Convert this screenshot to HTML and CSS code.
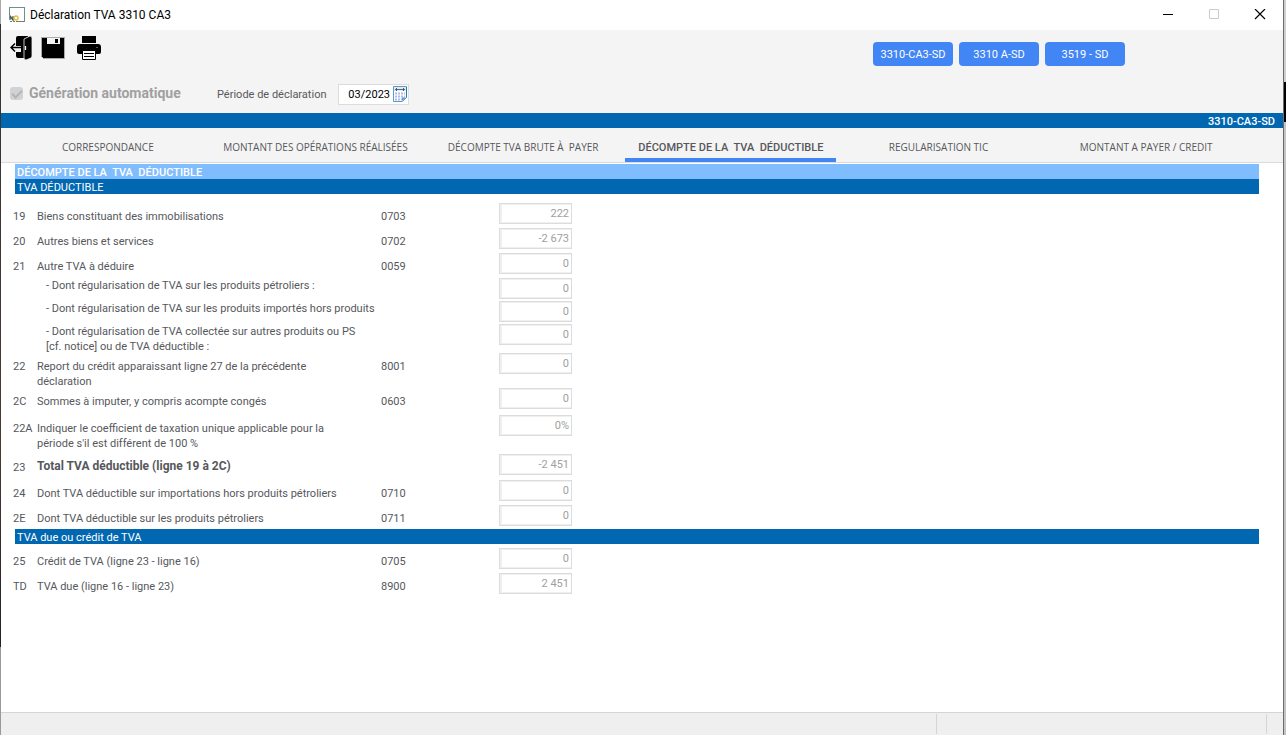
FILE: index.html
```html
<!DOCTYPE html>
<html lang="fr">
<head>
<meta charset="utf-8">
<title>Déclaration TVA 3310 CA3</title>
<link rel="stylesheet" href="styles.css">
</head>
<body>
<div class="desktop">
<div class="edge-left"></div>
<div class="window">
  <header class="titlebar">
    <svg class="app-icon" width="16" height="16" viewBox="0 0 16 16" aria-hidden="true">
      <rect x=".5" y=".5" width="15" height="14" fill="#fff" stroke="#6f9087"/>
      <path d="M0 8h9v7H0z" fill="#fff"/>
      <path d="M1 13V9l3 4V9" fill="none" stroke="#3f5560" stroke-width="1.3"/>
      <circle cx="7" cy="11" r="2" fill="none" stroke="#e3bd3c" stroke-width="1.4"/>
      <path d="M1 14.500h14" stroke="#6f7a60" stroke-dasharray="2 1"/>
    </svg>
    <h1 class="title">Déclaration TVA 3310 CA3</h1>
    <div class="controls">
      <button class="control" aria-label="Réduire"><svg width="12" height="12" viewBox="0 0 12 12"><path d="M1 5.500h10" stroke="#000"/></svg></button>
      <button class="control" aria-label="Agrandir" disabled><svg width="12" height="12" viewBox="0 0 12 12"><path d="M1.500.5h9v9h-9z" fill="none" stroke="#ccc"/></svg></button>
      <button class="control" aria-label="Fermer"><svg width="12" height="12" viewBox="0 0 12 12"><path d="M1 0l10 10M11 0L1 10" stroke="#000" stroke-width="1.200"/></svg></button>
    </div>
  </header>

  <div class="toolbar">
    <div class="tools">
      <button class="tool" aria-label="Quitter">
        <svg width="24" height="26" viewBox="0 0 24 26"><path d="M8 1h10v22H8q-2 0-2-2v-4h5v-6H6V3q0-2 2-2z"/><path d="M14 4l6-3q2 0 2 2v18q0 1-1 2l-5 2q-2 0-2-2z" stroke="#f4f4f4" stroke-width=".8"/><path d="M1 12.500h10M5 8.500l-4 4 4 4" fill="none" stroke="#000" stroke-width="1.500"/><path d="M15.500 11v4" stroke="#f4f4f4" stroke-width="1.300"/></svg>
      </button>
      <button class="tool" aria-label="Enregistrer">
        <svg width="24" height="24" viewBox="0 0 24 24"><path d="M.5 1.500h23v21H2.500l-2-2z" stroke="#aaa"/><path d="M6 2h13v6H6z" fill="#f4f4f4"/><path d="M14 3h3v4h-3z"/></svg>
      </button>
      <button class="tool" aria-label="Imprimer">
        <svg width="24" height="24" viewBox="0 0 24 24"><path d="M5 0h14v7H5z"/><path d="M3 8h18q3 0 3 3v5q0 2-2 2H2q-2 0-2-2v-5q0-3 3-3z"/><path d="M5.500 14.500h13v9h-13z" fill="#fff" stroke="#000"/><path d="M7 17.500h10M7 20.500h10" stroke="#000"/><path d="M19 11.500h2" stroke="#555"/></svg>
      </button>
    </div>
    <nav class="forms">
      <button class="form-button">3310-CA3-SD</button>
      <button class="form-button">3310 A-SD</button>
      <button class="form-button">3519 - SD</button>
    </nav>
  </div>

  <div class="options">
    <label class="auto"><input type="checkbox" class="check" checked disabled>Génération automatique</label>
    <label class="period-label" for="period">Période de déclaration</label>
    <div class="period">
      <input class="period-input" id="period" type="text" value="03/2023">
      <button class="calendar" aria-label="Choisir une date">
        <svg width="14" height="16" viewBox="0 0 14 16"><path d="M.5.5h13v11l-4 4h-9z" fill="#fff" stroke="#5c9bc7"/><path d="M1 1h12v4H1z" fill="#d9ecf7"/><path d="M2 3.500h10" stroke="#666"/><path d="M3.500 2v3M10.500 2v3" stroke="#555"/><path d="M2 7.500h10M2 10.500h10M2 13.500h7" stroke="#a9bcea" stroke-width="2" stroke-dasharray="2 1"/><path d="M13 11.500l-4 3.500v-3.500z" fill="#5b97cd"/><path d="M13.500 1v10.500" stroke="#1e78b5"/></svg>
      </button>
    </div>
  </div>

  <div class="form-band">3310-CA3-SD</div>

  <div class="tabs" role="tablist">
    <button class="tab" role="tab">CORRESPONDANCE</button>
    <button class="tab" role="tab">MONTANT DES OPÉRATIONS RÉALISÉES</button>
    <button class="tab" role="tab">DÉCOMPTE TVA BRUTE À&nbsp; PAYER</button>
    <button class="tab active" role="tab" aria-selected="true">DÉCOMPTE DE LA&nbsp; TVA&nbsp; DÉDUCTIBLE</button>
    <button class="tab" role="tab">REGULARISATION TIC</button>
    <button class="tab" role="tab">MONTANT A PAYER / CREDIT</button>
  </div>

  <main class="content">
    <h2 class="band light">DÉCOMPTE DE LA&nbsp; TVA&nbsp; DÉDUCTIBLE</h2>
    <h3 class="band">TVA DÉDUCTIBLE</h3>
    <div class="lines first">
      <div class="line"><span>19</span><label for="l19">Biens constituant des immobilisations</label><span>0703</span><input id="l19" class="amount" value="222" disabled></div>
      <div class="line"><span>20</span><label for="l20">Autres biens et services</label><span>0702</span><input id="l20" class="amount" value="-2 673" disabled></div>
      <div class="line lead"><span>21</span><label for="l21">Autre TVA à déduire</label><span>0059</span><input id="l21" class="amount" value="0" disabled></div>
      <div class="line sub"><span></span><label for="l21a">- Dont régularisation de TVA sur les produits pétroliers :</label><span></span><input id="l21a" class="amount" value="0" disabled></div>
      <div class="line sub"><span></span><label for="l21b">- Dont régularisation de TVA sur les produits importés hors produits</label><span></span><input id="l21b" class="amount" value="0" disabled></div>
      <div class="line sub"><span></span><label for="l21c">- Dont régularisation de TVA collectée sur autres produits ou PS<br>[cf. notice] ou de TVA déductible :</label><span></span><input id="l21c" class="amount" value="0" disabled></div>
      <div class="line"><span>22</span><label for="l22">Report du crédit apparaissant ligne 27 de la précédente<br>déclaration</label><span>8001</span><input id="l22" class="amount" value="0" disabled></div>
      <div class="line spaced"><span>2C</span><label for="l2c">Sommes à imputer, y compris acompte congés</label><span>0603</span><input id="l2c" class="amount" value="0" disabled></div>
      <div class="line tall"><span>22A</span><label for="l22a">Indiquer le coefficient de taxation unique applicable pour la<br>période s'il est différent de 100 %</label><span></span><input id="l22a" class="amount" value="0%" disabled></div>
      <div class="line total"><span>23</span><label for="l23">Total TVA déductible (ligne 19 à 2C)</label><span></span><input id="l23" class="amount" value="-2 451" disabled></div>
      <div class="line"><span>24</span><label for="l24">Dont TVA déductible sur importations hors produits pétroliers</label><span>0710</span><input id="l24" class="amount" value="0" disabled></div>
      <div class="line lead"><span>2E</span><label for="l2e">Dont TVA déductible sur les produits pétroliers</label><span>0711</span><input id="l2e" class="amount" value="0" disabled></div>
    </div>
    <h3 class="band">TVA due ou crédit de TVA</h3>
    <div class="lines">
      <div class="line"><span>25</span><label for="l25">Crédit de TVA (ligne 23 - ligne 16)</label><span>0705</span><input id="l25" class="amount" value="0" disabled></div>
      <div class="line"><span>TD</span><label for="ltd">TVA due (ligne 16 - ligne 23)</label><span>8900</span><input id="ltd" class="amount" value="2 451" disabled></div>
    </div>
  </main>

  <footer class="status"><div class="pane wide"></div><div class="pane"></div><div class="grip"></div></footer>
</div>
<div class="edge-right"></div>
</div>
</body>
</html>
```
FILE: styles.css
```css
* { box-sizing: border-box; }
body {
  margin: 0;
  font: 11px/15px "Trebuchet MS", Roboto, sans-serif;
  color: #56585c;
  background: #fff;
}
button, input { font: inherit; color: inherit; }
button { border: 0; padding: 0; background: none; }
h1, h2, h3 { margin: 0; font: inherit; }
.desktop { display: flex; min-height: 100vh; }
.edge-left { width: 1px; background: linear-gradient(#aaa 24px, #333 24px, #4a3a34 60%, #222 88%, #999 88%); }
.edge-right { width: 2px; background: linear-gradient(#d0d0d0 82px, #000 82px, #000 122px, #c4c4c4 122px); }
.window {
  flex: 1;
  display: flex;
  flex-direction: column;
  background: #f4f4f4;
  border-right: 1px solid #6c6c6c;
}
.titlebar {
  display: flex;
  align-items: center;
  height: 30px;
  padding-left: 8px;
  background: #fff;
}
.title { flex: 1; margin-left: 5px; font: 12px/16px "Segoe UI", Roboto, sans-serif; color: #000; }
.controls { display: flex; }
.control { width: 46px; height: 30px; display: grid; place-items: center; }

.toolbar { display: flex; justify-content: space-between; padding: 5px 158px 0 9px; height: 48px; }
.tools { display: flex; gap: 12px; align-items: start; }
.tool { display: grid; place-items: center; width: 24px; height: 26px; }
.tool:first-child { margin-right: -5px; }
.forms { display: flex; gap: 6px; padding-top: 7px; }
.form-button { width: 80px; height: 24px; border-radius: 4px; background: #4285f4; color: #fff; }

.options { display: flex; align-items: center; height: 35px; padding: 0 0 3px 9px; }
.auto {
  display: flex;
  align-items: center;
  gap: 6px;
  width: 207px;
  padding-bottom: 2px;
  font: bold 14px/16px "Trebuchet MS", Roboto, sans-serif;
  color: #a0a0a0;
}
.check {
  appearance: none;
  width: 13px;
  height: 13px;
  margin: 0;
  border-radius: 3px;
  background: #d0d2d4;
  display: grid;
  place-items: center;
}
.check::after {
  content: "";
  width: 8px;
  height: 4px;
  border: solid #b4b4b4;
  border-width: 0 0 2px 2px;
  transform: rotate(-45deg);
}
.period-label { width: 121px; }
.period {
  display: flex;
  align-items: center;
  width: 71px;
  height: 21px;
  background: #fff;
  border: 1px solid #dcdcdc;
}
.period-input { width: 54px; border: 0; padding: 0 3px 0 0; background: none; text-align: right; color: #000; outline: 0; }
.calendar { display: grid; }

.form-band { padding: 2px 8px 0 0; line-height: 13px; background: #0067b0; color: #fff; font-weight: 500; text-align: right; }
.tabs {
  display: grid;
  grid-template-columns: repeat(6, 1fr);
  height: 35px;
  padding: 0 33px 0 3px;
  border-bottom: 1px solid #d8dade;
}
.tab { position: relative; white-space: nowrap; padding-top: 5px; font-family: "Trebuchet MS", "Open Sans", sans-serif; font-size: 10px; }
.active { padding-top: 4px; font-family: "Trebuchet MS", Roboto, sans-serif; font-size: 11px; font-weight: 500; }
.active::after { content: ""; position: absolute; left: -2px; right: -1px; bottom: 0; height: 4px; background: #4285f4; }

.content { flex: 1; padding-top: 1px; background: #fff; }
.band { margin: 0 24px 0 14px; padding: 2px 0 0 2px; line-height: 13px; background: #0067b0; color: #fff; }
.light { background: #80bdff; font-weight: 500; }
.lines { padding: 4px 0 0 12px; }
.first { padding-top: 9px; }
.line {
  display: grid;
  grid-template-columns: 24px 344px 118px 73px;
  align-items: start;
  min-height: 25px;
  white-space: nowrap;
}
.line > span, .line > label { padding-top: 6px; margin-bottom: -1px; }
.lead { min-height: 24px; }
.sub { min-height: 23px; }
.line.sub > label { padding: 1px 0 0 9px; }
.sub > .amount { margin-top: 1px; }
.spaced { min-height: 27px; }
.tall { min-height: 39px; }
.total { min-height: 26px; }
.total > label { font-weight: bold; font-size: 12px; padding-top: 5px; }
.amount {
  width: 73px;
  height: 21px;
  padding: 0 2px 1px;
  border: 1px solid #dcdcdc;
  box-shadow: inset 2px 1px #f0f0f0, inset 0 -1px #f0f0f0;
  background: #fff;
  color: #a0a0a0;
  text-align: right;
}

.status { display: flex; height: 23px; background: #efefef; border-top: 1px solid #d5d5d5; padding: 1px 0; }
.pane { border-right: 1px solid #d5d5d5; width: 330px; }
.wide { flex: 1; }
.grip { width: 16px; }
```
